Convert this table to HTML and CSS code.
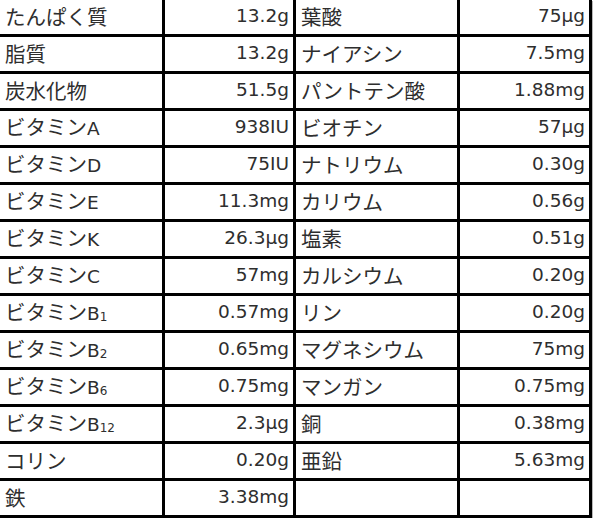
FILE: index.html
```html
<!DOCTYPE html>
<html lang="ja">
<head>
<meta charset="utf-8">
<link rel="stylesheet" href="styles.css">
</head>
<body>
<table class="nutri">
<colgroup><col class="c1"><col class="c2"><col class="c3"><col class="c4"></colgroup>
<tbody>
<tr><td class="lab">たんぱく質</td><td class="val">13.2g</td><td class="lab">葉酸</td><td class="val">75µg</td></tr>
<tr><td class="lab">脂質</td><td class="val">13.2g</td><td class="lab">ナイアシン</td><td class="val">7.5mg</td></tr>
<tr><td class="lab">炭水化物</td><td class="val">51.5g</td><td class="lab">パントテン酸</td><td class="val">1.88mg</td></tr>
<tr><td class="lab">ビタミン<span class="lat">A</span></td><td class="val">938IU</td><td class="lab">ビオチン</td><td class="val">57µg</td></tr>
<tr><td class="lab">ビタミン<span class="lat">D</span></td><td class="val">75IU</td><td class="lab">ナトリウム</td><td class="val">0.30g</td></tr>
<tr><td class="lab">ビタミン<span class="lat">E</span></td><td class="val">11.3mg</td><td class="lab">カリウム</td><td class="val">0.56g</td></tr>
<tr><td class="lab">ビタミン<span class="lat">K</span></td><td class="val">26.3µg</td><td class="lab">塩素</td><td class="val">0.51g</td></tr>
<tr><td class="lab">ビタミン<span class="lat">C</span></td><td class="val">57mg</td><td class="lab">カルシウム</td><td class="val">0.20g</td></tr>
<tr><td class="lab">ビタミン<span class="lat">B<sub>1</sub></span></td><td class="val">0.57mg</td><td class="lab">リン</td><td class="val">0.20g</td></tr>
<tr><td class="lab">ビタミン<span class="lat">B<sub>2</sub></span></td><td class="val">0.65mg</td><td class="lab">マグネシウム</td><td class="val">75mg</td></tr>
<tr><td class="lab">ビタミン<span class="lat">B<sub>6</sub></span></td><td class="val">0.75mg</td><td class="lab">マンガン</td><td class="val">0.75mg</td></tr>
<tr><td class="lab">ビタミン<span class="lat">B<sub>12</sub></span></td><td class="val">2.3µg</td><td class="lab">銅</td><td class="val">0.38mg</td></tr>
<tr><td class="lab">コリン</td><td class="val">0.20g</td><td class="lab">亜鉛</td><td class="val">5.63mg</td></tr>
<tr><td class="lab">鉄</td><td class="val">3.38mg</td><td class="lab"></td><td class="val"></td></tr>
</tbody>
</table>
</body>
</html>
```

FILE: styles.css
```css
html, body {
  margin: 0;
  padding: 0;
  background: #fff;
}

.nutri {
  border-collapse: separate;
  border-spacing: 0;
  table-layout: fixed;
  width: 592px;
  color: #2e2e2e;
  box-shadow: 1px 1px 0 #b8b8b8;
}

.c1 { width: 165px; }
.c2 { width: 131px; }
.c3 { width: 164px; }
.c4 { width: 132px; }

.nutri td {
  height: 34px;
  padding-top: 0;
  padding-bottom: 2px;
  border-right: 3px solid #000;
  border-bottom: 3px solid #000;
  vertical-align: middle;
  white-space: nowrap;
  overflow: hidden;
  line-height: 20px;
  box-sizing: border-box;
}

.nutri tr:first-child td {
  height: 34px;
}

.nutri tr td {
  height: 37px;
}

.nutri tr:first-child td {
  height: 37px;
}

.lab {
  font-family: "Noto Sans CJK JP", sans-serif;
  font-size: 20.5px;
  padding-left: 5px;
  padding-right: 0;
  text-align: left;
}

.val {
  font-family: "DejaVu Sans", "Noto Sans CJK JP", sans-serif;
  font-size: 18.5px;
  text-align: right;
  padding-left: 0;
  padding-right: 4px;
}

.lat {
  font-family: "DejaVu Sans", sans-serif;
  font-size: 18.5px;
  line-height: 20px;
}

.lat sub {
  font-size: 12px;
  line-height: 12px;
  vertical-align: baseline;
  position: relative;
  top: 1px;
}
```
